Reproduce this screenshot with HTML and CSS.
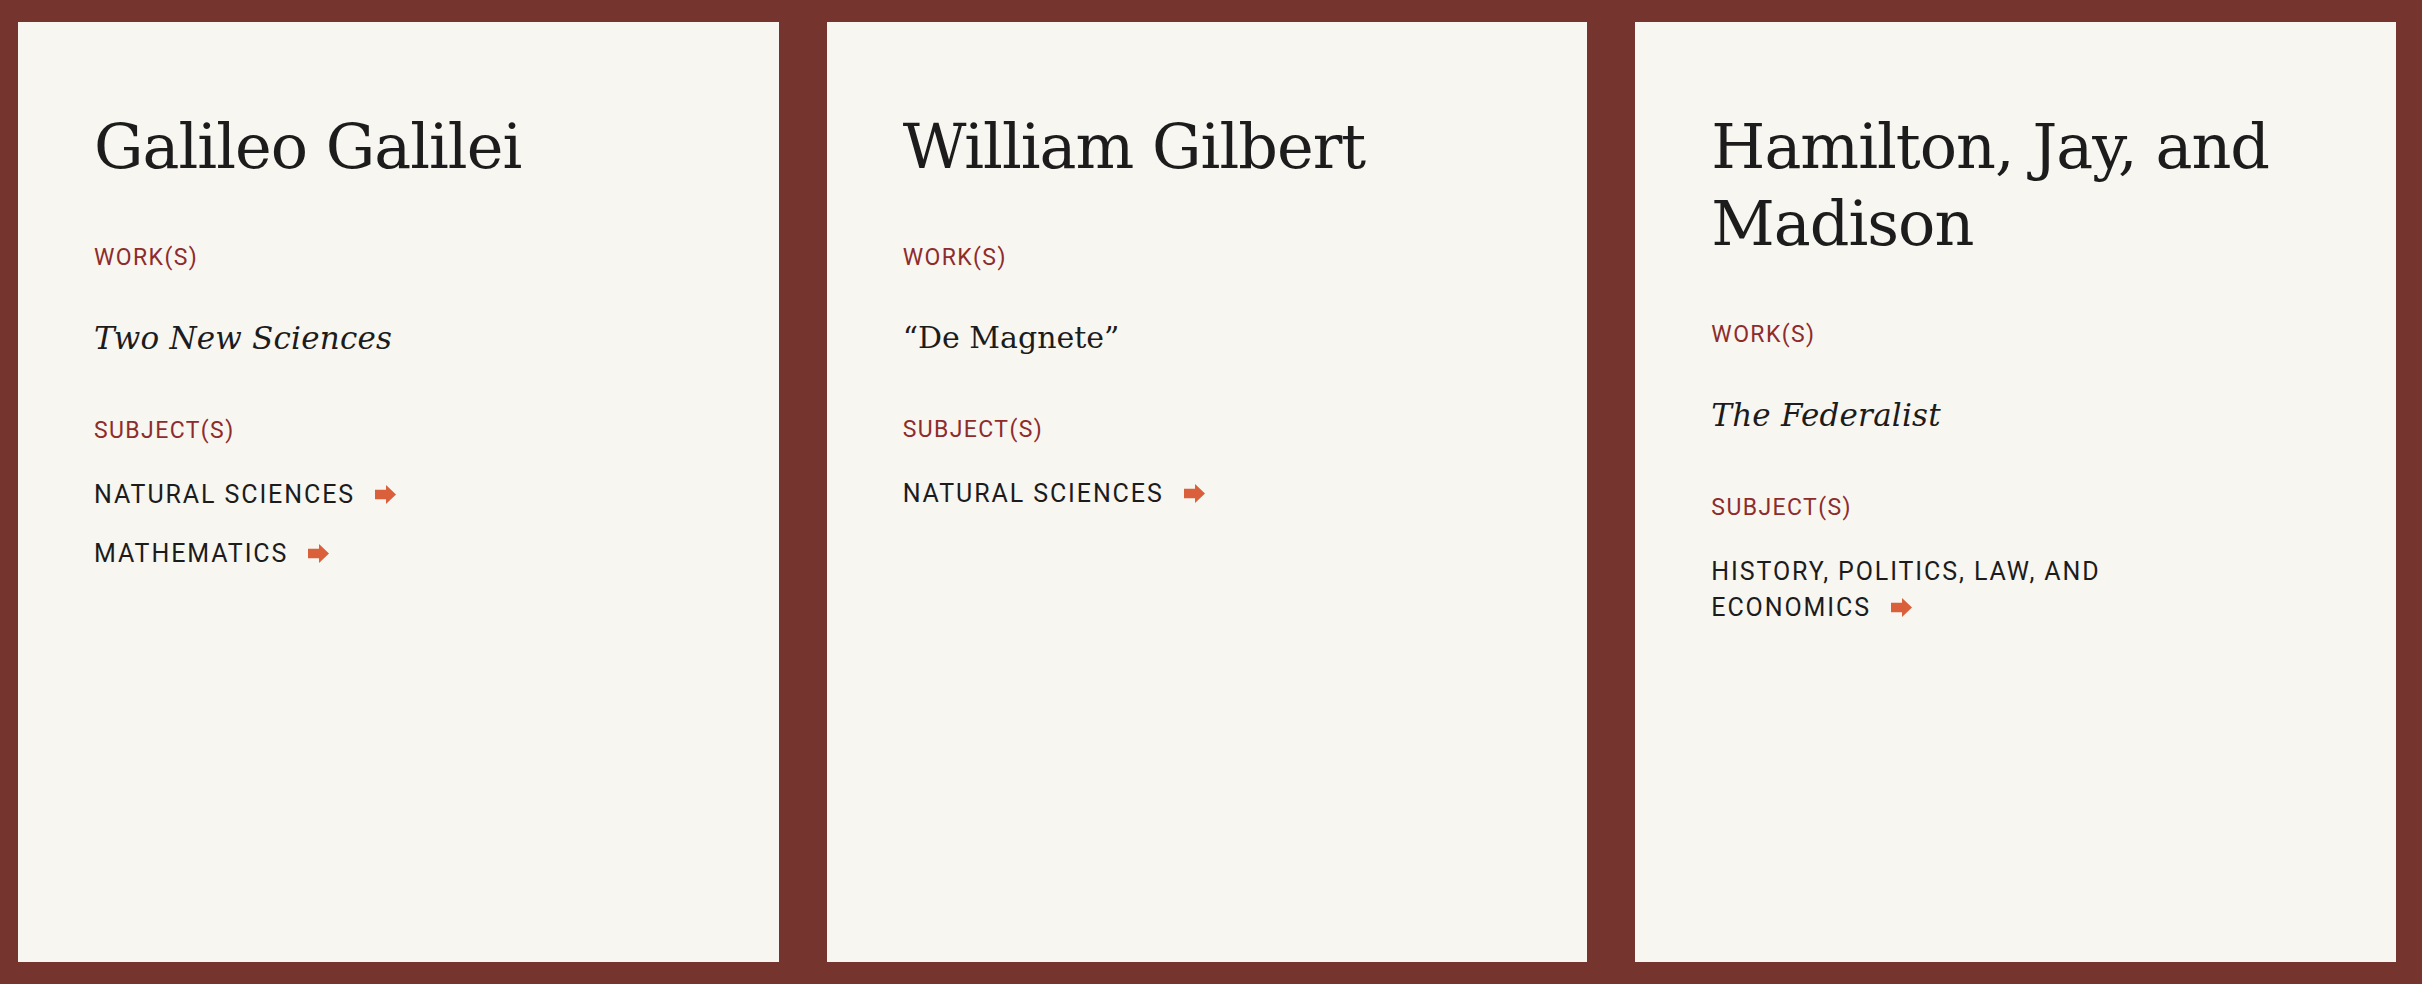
FILE: index.html
```html
<!DOCTYPE html>
<html lang="en">
<head>
<meta charset="utf-8">
<title>Authors</title>
<link rel="stylesheet" href="styles.css">
</head>
<body>
<main class="grid">
  <article class="card">
    <h2 class="name">Galileo Galilei</h2>
    <h3 class="label">Work(s)</h3>
    <p class="work"><em>Two New Sciences</em></p>
    <h3 class="label label-subjects">Subject(s)</h3>
    <ul class="subjects">
      <li><a href="#">Natural Sciences<svg class="arrow" viewBox="0 0 20 18" aria-hidden="true"><path d="M0 4.5h10.5V0L20 9l-9.5 9v-4.5H0z"/></svg></a></li>
      <li><a href="#">Mathematics<svg class="arrow" viewBox="0 0 20 18" aria-hidden="true"><path d="M0 4.5h10.5V0L20 9l-9.5 9v-4.5H0z"/></svg></a></li>
    </ul>
  </article>
  <article class="card">
    <h2 class="name">William Gilbert</h2>
    <h3 class="label">Work(s)</h3>
    <p class="work">“De Magnete”</p>
    <h3 class="label label-subjects">Subject(s)</h3>
    <ul class="subjects">
      <li><a href="#">Natural Sciences<svg class="arrow" viewBox="0 0 20 18" aria-hidden="true"><path d="M0 4.5h10.5V0L20 9l-9.5 9v-4.5H0z"/></svg></a></li>
    </ul>
  </article>
  <article class="card">
    <h2 class="name">Hamilton, Jay, and Madison</h2>
    <h3 class="label">Work(s)</h3>
    <p class="work"><em>The Federalist</em></p>
    <h3 class="label label-subjects">Subject(s)</h3>
    <ul class="subjects">
      <li><a href="#">History, Politics, Law, and Economics<svg class="arrow" viewBox="0 0 20 18" aria-hidden="true"><path d="M0 4.5h10.5V0L20 9l-9.5 9v-4.5H0z"/></svg></a></li>
    </ul>
  </article>
</main>
</body>
</html>
```

FILE: styles.css
```css
html, body {
  margin: 0;
  padding: 0;
  height: 100%;
}

body {
  background: #75352e;
  color: #1c1c1c;
  font-family: "DejaVu Serif", "Liberation Serif", serif;
}

.grid {
  box-sizing: border-box;
  height: 100vh;
  display: grid;
  grid-template-columns: repeat(3, 1fr);
  gap: 48px;
  padding: 22px 26px 22px 18px;
}

.card {
  background: #f8f6f1;
  padding: 87px 76px 40px 76px;
  min-width: 0;
}

.name {
  margin: 0;
  font-family: "DejaVu Serif", serif;
  font-weight: 400;
  font-size: 62px;
  line-height: 76.8px;
  letter-spacing: -1px;
  max-width: 560px;
}

.label {
  margin: 56.5px 0 0;
  font-family: Roboto, "Liberation Sans", sans-serif;
  font-weight: 400;
  font-size: 23px;
  line-height: 32px;
  letter-spacing: 1.4px;
  text-transform: uppercase;
  color: #8e2c2c;
}

.work {
  margin: 44px 0 0;
  font-family: "DejaVu Serif", serif;
  font-size: 30px;
  line-height: 40px;
}

.work em {
  font-style: italic;
  font-size: 31px;
  letter-spacing: 0.2px;
}

.label-subjects {
  margin-top: 56px;
}

.subjects {
  list-style: none;
  margin: 29.5px 0 0;
  padding: 0;
  max-width: 440px;
  display: flex;
  flex-direction: column;
  gap: 23.5px;
}

.subjects a {
  font-family: Roboto, "Liberation Sans", sans-serif;
  font-size: 25px;
  line-height: 36px;
  letter-spacing: 1.9px;
  text-transform: uppercase;
  color: #1c1c1c;
  text-decoration: none;
}

.arrow {
  width: 21px;
  height: 19px;
  margin-left: 20px;
  vertical-align: -1px;
  fill: #d9603a;
}
```
